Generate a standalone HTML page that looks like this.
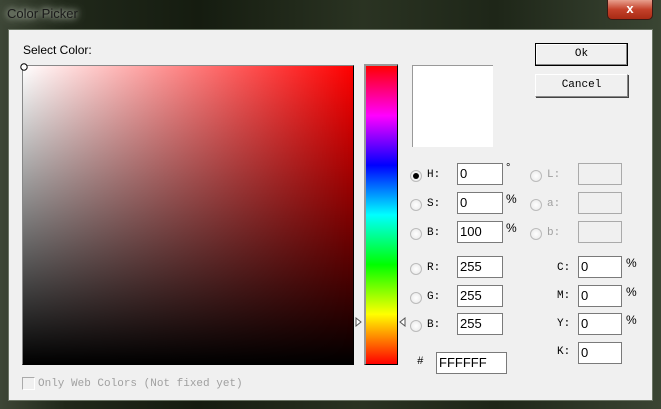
<!DOCTYPE html>
<html><head><meta charset="utf-8"><style>
*{box-sizing:border-box;margin:0;padding:0}
body{width:661px;height:409px;overflow:hidden;position:relative;font-family:"Liberation Sans",sans-serif;font-size:12px;background:#2b3326}
.tb{position:absolute;left:0;top:0;width:661px;height:409px;background:linear-gradient(90deg,#3d4636 0%,#20281a 10%,#151c10 30%,#2a3322 55%,#1e2618 75%,#3a4533 100%)}
.title{position:absolute;left:7px;top:6px;color:#1a1a1a;font-size:13px;text-shadow:0 0 6px #c8d0c0,0 0 10px #c8d0c0}
.close{position:absolute;left:607px;top:0;width:46px;height:20px;border:1px solid #3a1a14;border-top:none;border-radius:0 0 5px 5px;background:linear-gradient(#e8a08e,#c4412a 50%,#a82a14);color:#fff;font-weight:bold;text-align:center;font-size:13px;line-height:18px}
.c{position:absolute;left:8px;top:29px;width:645px;height:372px;background:#f0f0f0;border:1px solid #6a7464}
.a{position:absolute}
.sq{left:22px;top:65px;width:332px;height:300px;border:1px solid #000;border-top-color:#888;border-left-color:#888;background:linear-gradient(to top,#000,rgba(0,0,0,0)),linear-gradient(to right,#fff,#f00)}
.hue{left:364px;top:64px;width:34px;height:301px;border:1px solid #000;border-top:2px solid #999;border-left:2px solid #999;background:linear-gradient(#f00,#f0f 16.7%,#00f 33.3%,#0ff 50%,#0f0 66.7%,#ff0 83.3%,#f00)}
.prev{left:412px;top:65px;width:81px;height:82px;background:#fff;border-top:1px solid #999;border-left:1px solid #999}
.btn{left:535px;width:93px;height:23px;background:#f0f0f0;border:1px solid #fff;border-right-color:#888;border-bottom-color:#888;box-shadow:1px 1px 0 #444;text-align:center;font-family:"Liberation Mono",monospace;font-size:11px;line-height:21px}
.in{width:46px;height:22px;background:#fff;border:1px solid #7a7a7a;font-size:13px;padding-left:2px;line-height:19px;color:#000}
.dis{background:#f0f0f0;border-color:#aaa}
.rd{width:12px;height:12px;border-radius:50%;border:1px solid #bbb;background:radial-gradient(#fff,#e6e6e6)}
.lb{font-family:"Liberation Mono",monospace;font-size:11px}
.g{color:#a0a0a0}
</style></head><body>
<div class="tb"></div>
<div class="title">Color Picker</div>
<div class="close">x</div>
<div class="c"></div>
<div class="a" style="left:23px;top:43px;font-size:12px">Select Color:</div>
<div class="a sq"></div>
<svg class="a" style="left:19px;top:62px" width="10" height="10"><circle cx="5" cy="5" r="3.2" stroke="#000" fill="#fff"/></svg>
<div class="a hue"></div>
<svg class="a" style="left:355px;top:317px" width="8" height="10"><path d="M1 1 L6 5 L1 9 Z" fill="#fff" stroke="#555"/></svg>
<svg class="a" style="left:398px;top:317px" width="8" height="10"><path d="M7 1 L2 5 L7 9 Z" fill="#fff" stroke="#555"/></svg>
<div class="a prev"></div>
<div class="a btn" style="top:43px;border:1px solid #000;box-shadow:inset -1px -1px 0 #888,inset 1px 1px 0 #fff">Ok</div>
<div class="a btn" style="top:74px">Cancel</div>

<div class="a rd" style="left:410px;top:170px"></div><div class="a" style="left:413px;top:173px;width:6px;height:6px;border-radius:50%;background:#000"></div>
<div class="a lb" style="left:427px;top:169px">H:</div>
<div class="a in" style="left:457px;top:163px">0</div><div class="a" style="left:506px;top:162px;font-size:11px">°</div>
<div class="a rd" style="left:410px;top:199px"></div><div class="a lb" style="left:427px;top:198px">S:</div>
<div class="a in" style="left:457px;top:192px">0</div><div class="a" style="left:506px;top:192px">%</div>
<div class="a rd" style="left:410px;top:228px"></div><div class="a lb" style="left:427px;top:227px">B:</div>
<div class="a in" style="left:457px;top:221px">100</div><div class="a" style="left:506px;top:221px">%</div>
<div class="a rd" style="left:410px;top:263px"></div><div class="a lb" style="left:427px;top:262px">R:</div>
<div class="a in" style="left:457px;top:256px">255</div>
<div class="a rd" style="left:410px;top:292px"></div><div class="a lb" style="left:427px;top:291px">G:</div>
<div class="a in" style="left:457px;top:285px">255</div>
<div class="a rd" style="left:410px;top:320px"></div><div class="a lb" style="left:427px;top:319px">B:</div>
<div class="a in" style="left:457px;top:313px">255</div>

<div class="a rd" style="left:530px;top:170px"></div><div class="a lb g" style="left:547px;top:169px">L:</div>
<div class="a in dis" style="left:578px;top:163px;width:44px"></div>
<div class="a rd" style="left:530px;top:199px"></div><div class="a lb g" style="left:547px;top:198px">a:</div>
<div class="a in dis" style="left:578px;top:192px;width:44px"></div>
<div class="a rd" style="left:530px;top:228px"></div><div class="a lb g" style="left:547px;top:227px">b:</div>
<div class="a in dis" style="left:578px;top:221px;width:44px"></div>

<div class="a lb" style="left:557px;top:262px">C:</div><div class="a in" style="left:578px;top:256px;width:44px">0</div><div class="a" style="left:626px;top:256px">%</div>
<div class="a lb" style="left:557px;top:290px">M:</div><div class="a in" style="left:578px;top:285px;width:44px">0</div><div class="a" style="left:626px;top:285px">%</div>
<div class="a lb" style="left:557px;top:318px">Y:</div><div class="a in" style="left:578px;top:313px;width:44px">0</div><div class="a" style="left:626px;top:313px">%</div>
<div class="a lb" style="left:557px;top:346px">K:</div><div class="a in" style="left:578px;top:342px;width:44px">0</div>

<div class="a lb" style="left:417px;top:356px">#</div>
<div class="a in" style="left:436px;top:352px;width:71px">FFFFFF</div>

<div class="a" style="left:22px;top:377px;width:13px;height:13px;border:1px solid #aaa;border-right-color:#fff;border-bottom-color:#fff;background:#f0f0f0"></div>
<div class="a lb g" style="left:38px;top:378px">Only Web Colors (Not fixed yet)</div>
</body></html>
